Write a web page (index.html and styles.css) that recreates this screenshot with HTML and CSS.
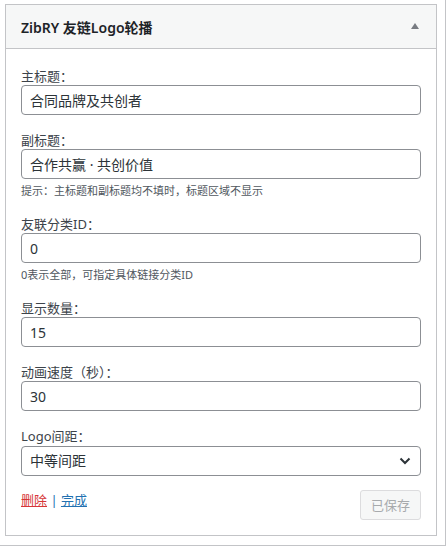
FILE: index.html
```html
<!DOCTYPE html>
<html lang="zh-CN">
<head>
<meta charset="utf-8">
<title>ZibRY 友链Logo轮播</title>
<link rel="stylesheet" href="styles.css">
</head>
<body>
<div class="frame">
  <div class="widget">
    <div class="widget-top">
      <h3 class="widget-title">ZibRY 友链Logo轮播</h3>
      <span class="toggle" aria-hidden="true">
        <svg width="8" height="6" viewBox="0 0 8 6"><path d="M4 0 L8 6 L0 6 Z" fill="#787c82"/></svg>
      </span>
    </div>
    <div class="widget-inside">
      <div class="field">
        <label class="label">主标题：</label>
        <input class="input" type="text" value="合同品牌及共创者">
      </div>
      <div class="field">
        <label class="label">副标题：</label>
        <input class="input" type="text" value="合作共赢 · 共创价值">
        <p class="hint">提示：主标题和副标题均不填时，标题区域不显示</p>
      </div>
      <div class="field">
        <label class="label">友联分类ID：</label>
        <input class="input" type="text" value="0">
        <p class="hint">0表示全部，可指定具体链接分类ID</p>
      </div>
      <div class="field">
        <label class="label">显示数量：</label>
        <input class="input" type="text" value="15">
      </div>
      <div class="field">
        <label class="label">动画速度（秒）：</label>
        <input class="input" type="text" value="30">
      </div>
      <div class="field">
        <label class="label">Logo间距：</label>
        <div class="select">
          <span class="select-value">中等间距</span>
          <svg class="chevron" width="12" height="8" viewBox="0 0 12 8"><path d="M1.5 1.5 L6 6 L10.5 1.5" fill="none" stroke="#2c3338" stroke-width="2"/></svg>
        </div>
      </div>
      <div class="actions">
        <div class="links"><a class="delete" href="#">删除</a> | <a class="done" href="#">完成</a></div>
        <button class="save" type="button" disabled>已保存</button>
      </div>
    </div>
  </div>
</div>
</body>
</html>
```

FILE: styles.css
```css
* { box-sizing: border-box; }

html, body {
  margin: 0;
  padding: 0;
  background: #ffffff;
}

body {
  font-family: "Noto Sans", "Noto Sans CJK SC", sans-serif;
  color: #3c434a;
  font-size: 13px;
}

.frame {
  width: 446px;
  height: 547px;
  padding: 4px 0 0 5px;
  border-right: 1px solid #c3c4c7;
  border-bottom: 1px solid #c3c4c7;
  margin-top: -1px;
  padding-top: 5px;
}

.widget {
  width: 432px;
  border: 1px solid #c3c4c7;
  background: #ffffff;
}

.widget-top {
  height: 44px;
  background: #f6f7f7;
  border-bottom: 1px solid #c3c4c7;
  display: flex;
  align-items: center;
  justify-content: space-between;
  padding: 0 17px 0 15px;
}

.widget-title {
  margin: 0;
  font-size: 14px;
  font-weight: 600;
  line-height: 20px;
  color: #1d2327;
  padding-top: 2px;
}

.toggle {
  display: flex;
  align-items: center;
  margin-top: -2px;
}

.widget-inside {
  padding: 18px 15px 15px;
  display: flex;
  flex-direction: column;
  gap: 16px;
}

.field {
  display: flex;
  flex-direction: column;
}

.label {
  display: block;
  font-size: 13px;
  line-height: 18px;
  color: #3c434a;
}

.input, .select {
  width: 400px;
  height: 30px;
  border: 1px solid #8c8f94;
  border-radius: 4px;
  padding: 0 8px;
  font-family: "Noto Sans", "Noto Sans CJK SC", sans-serif;
  font-size: 14px;
  color: #2c3338;
  background: #ffffff;
  margin: 0;
  outline: none;
}

.select {
  display: flex;
  align-items: center;
  justify-content: space-between;
  padding: 0 9px 0 8px;
  margin-top: 1px;
}

.select-value {
  line-height: 20px;
}

.hint {
  margin: 4px 0 0;
  font-size: 11px;
  line-height: 16px;
  color: #50575e;
}

.actions {
  display: flex;
  justify-content: space-between;
  align-items: flex-start;
  margin-top: -2px;
}

.links {
  font-size: 13px;
  line-height: 20px;
  padding-top: 0;
  color: #2271b1;
}

.links a {
  text-decoration: underline;
}

.delete { color: #d63638; }
.done { color: #2271b1; }

.save {
  width: 61px;
  height: 30px;
  border: 1px solid #dcdcde;
  border-radius: 3px;
  background: #f6f7f7;
  color: #a7aaad;
  font-family: "Noto Sans", "Noto Sans CJK SC", sans-serif;
  font-size: 13px;
  padding: 0 10px;
  line-height: 28px;
}
```
